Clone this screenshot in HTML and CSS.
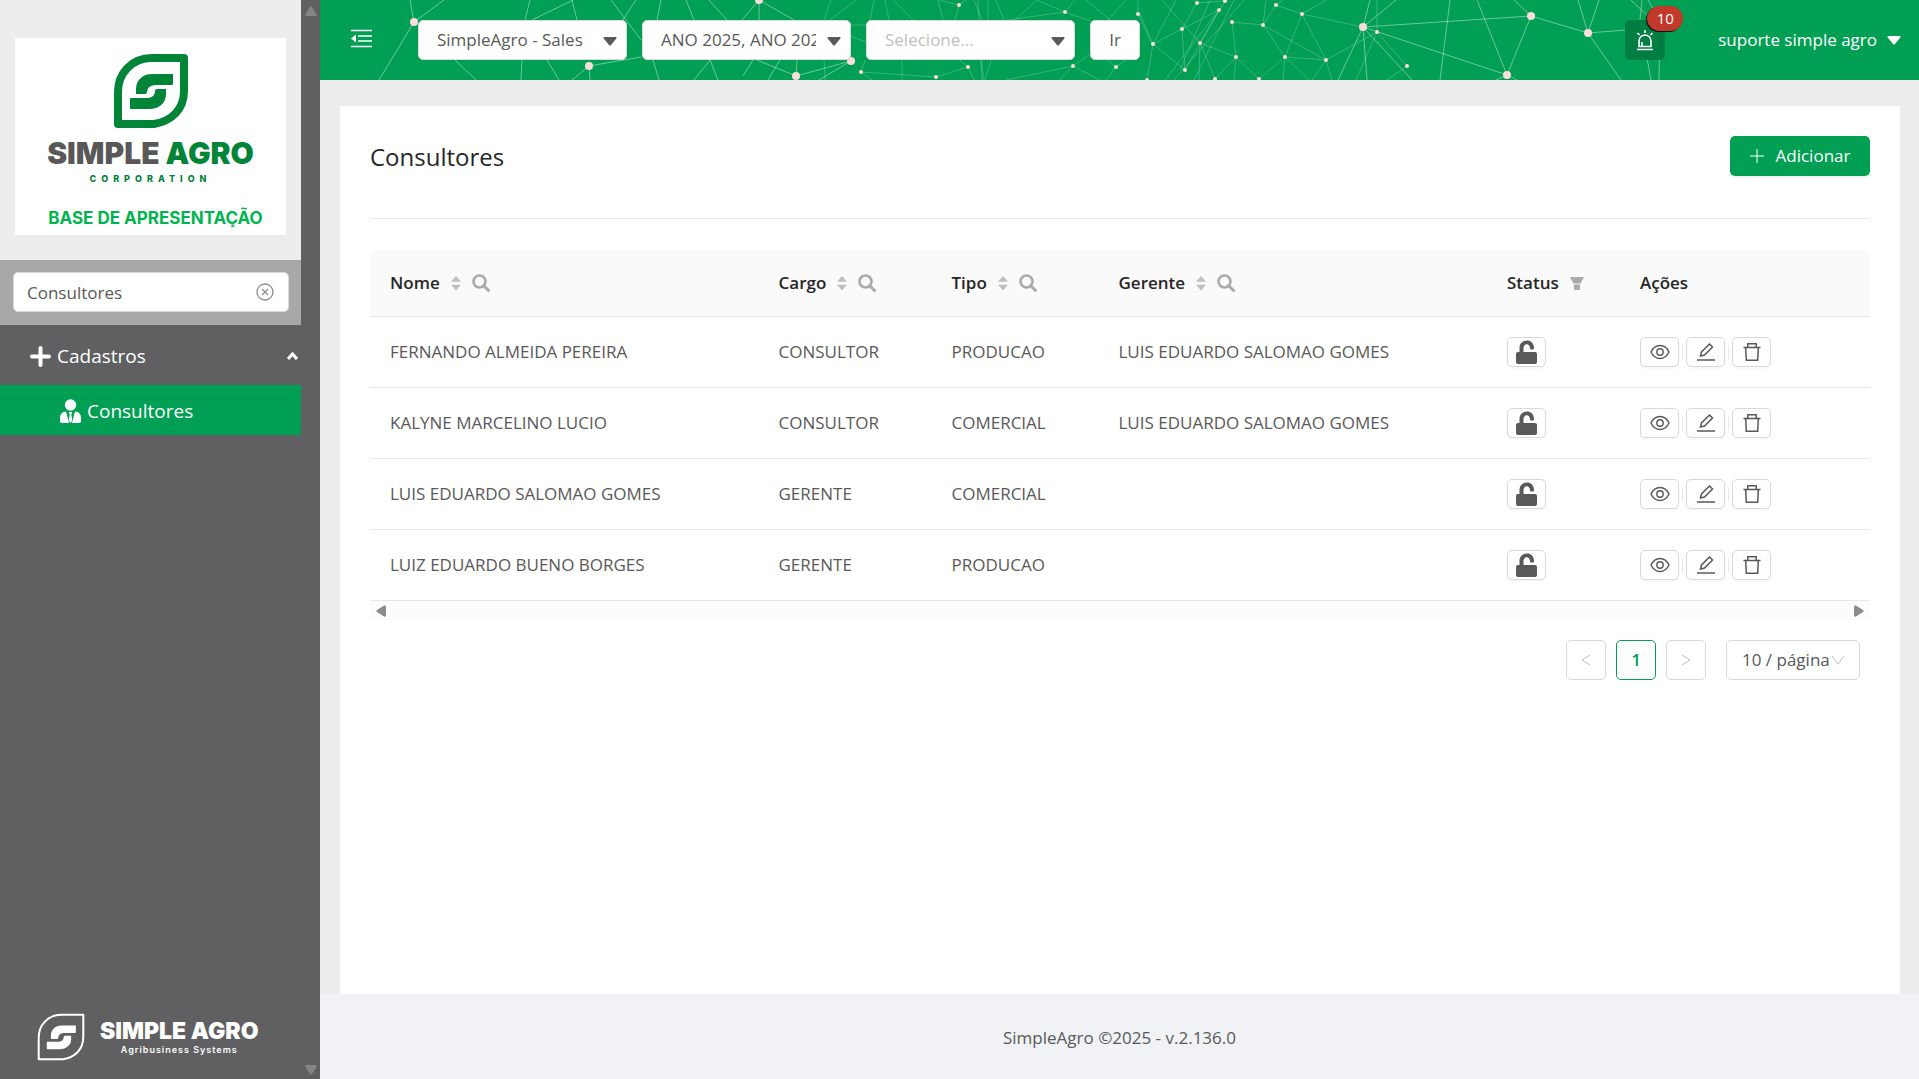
FILE: index.html
```html
<!DOCTYPE html>
<html lang="pt-BR">
<head>
<meta charset="utf-8">
<meta name="viewport" content="width=device-width, initial-scale=1">
<title>SimpleAgro - Consultores</title>
<link rel="stylesheet" href="styles.css">
</head>
<body>
<svg class="sprite" aria-hidden="true">
  <symbol id="i-caret" viewBox="0 0 14 9"><path d="M1 0h12q1 .5.3 1.400L8 8q-1 1-2 0L.7 1.400Q0 .5 1 0z"/></symbol>
  <symbol id="i-sort" viewBox="0 0 10 16"><path d="M5 1l5 5.800H0zM5 15.500l5-5.800H0z"/></symbol>
  <symbol id="i-search" viewBox="0 0 18 18"><circle cx="7.500" cy="7.500" r="6" fill="none" stroke="currentColor" stroke-width="2.600"/><path d="M11.500 11.500l5 5" stroke="currentColor" stroke-width="3" stroke-linecap="round"/></symbol>
  <symbol id="i-eye" viewBox="0 0 20 16"><path d="M1 8C5-.7 15-.7 19 8 15 16.700 5 16.700 1 8z" fill="none" stroke="currentColor" stroke-width="1.400"/><circle cx="10" cy="8" r="3.200" fill="none" stroke="currentColor" stroke-width="1.400"/></symbol>
  <symbol id="i-edit" viewBox="0 0 18 18"><path d="M3.500 13l1-4L12.500 1l3 3-8 8zM0 17h18" fill="none" stroke="currentColor" stroke-width="1.500"/></symbol>
  <symbol id="i-trash" viewBox="0 0 18 18"><path d="M.5 4.500h17M2.700 4.500l.6 12.700h11.400l.6-12.700M4.800 4V.8h8.400V4" fill="none" stroke="currentColor" stroke-width="1.500"/></symbol>
  <symbol id="i-unlock" viewBox="0 0 22 24"><path d="M3.500 12V8C3.500-1.500 18-2.500 18 8v.5q0 1-1 1h-2q-1 0-1-1C14 3 7.500 3 7.500 8v4H19q2 0 2 2v8q0 2-2 2H2q-2 0-2-2v-8q0-2 2-2z"/></symbol>
  <symbol id="i-leaf" viewBox="0 0 74 74"><path d="M38 4h32v33c0 18-12 30-30 33H4V38C4 20 17 4 38 4z" fill="none" stroke="currentColor" stroke-width="var(--leaf-line)" stroke-linejoin="round"/><path d="M59 20v10q0 1-1 1H41q-8 1-8 7 0 2-2 2H22V35c0-9 7-15 16-15zM16 54V45q0-1 1-1h17q7-1 7-7 0-2 2-2h9v5c0 9-7 15-17 15H17q-1 0-1-1z" fill="currentColor"/></symbol>
</svg>

<aside class="sidebar">
  <div class="side-main">
    <div class="brand">
      <div class="brand-card">
        <svg class="brand-leaf" aria-hidden="true"><use href="#i-leaf"/></svg>
        <p class="brand-name">SIMPLE <span>AGRO</span></p>
        <p class="brand-sub">CORPORATION</p>
        <p class="brand-base">BASE DE APRESENTAÇÃO</p>
      </div>
    </div>
    <div class="side-search">
      <div class="search-box">
        <input type="text" value="Consultores" aria-label="Pesquisar no menu">
        <button type="button" class="clear" aria-label="Limpar"><svg viewBox="0 0 18 18" aria-hidden="true"><circle cx="9" cy="9" r="8"/><path d="M6 6l6 6M12 6l-6 6"/></svg></button>
      </div>
    </div>
    <nav>
      <button type="button" class="menu-group">
        <svg class="plus" viewBox="0 0 21 21" aria-hidden="true"><path d="M10.500 2v17M2 10.500h17"/></svg>
        <span>Cadastros</span>
        <svg class="chev" viewBox="0 0 11 8" aria-hidden="true"><path d="M1 7l4.500-5L10 7"/></svg>
      </button>
      <a class="menu-item" href="#consultores">
        <svg viewBox="0 0 21 24" aria-hidden="true"><circle cx="10.500" cy="6" r="5.700"/><path d="M6 12.500l3 11.500H2q-2 0-2-2v-3q0-6 6-6.500zM15 12.500q6 .5 6 6.500v3q0 2-2 2h-7zM8.700 13h3.600l-1 2.500 1 6-1.800 2.500-1.800-2.500 1-6z"/></svg>
        <span>Consultores</span>
      </a>
    </nav>
    <div class="side-foot">
      <svg class="foot-leaf" aria-hidden="true"><use href="#i-leaf"/></svg>
      <div>
        <p class="foot-name">SIMPLE AGRO</p>
        <p class="foot-sub">Agribusiness Systems</p>
      </div>
    </div>
  </div>
  <div class="side-scroll" aria-hidden="true">
    <svg viewBox="0 0 12 10"><path d="M5 1q1-1.500 2 0l4.500 7q.5 2-1 2h-9q-1.500 0-1-2z"/></svg>
    <svg viewBox="0 0 12 10"><path d="M5 9q1 1.500 2 0l4.500-7q.5-2-1-2h-9q-1.500 0-1 2z"/></svg>
  </div>
</aside>

<div class="page">
  <header class="topbar">
    <svg class="net" viewBox="320 0 1599 80" preserveAspectRatio="xMinYMin slice" aria-hidden="true">
      <path class="far" d="M856 0L830 20M831 0L824 20M874 0L870 20M885 0l4 20M893 0l20 20M850 25h16M850 36l16 6M824 60l1 20M861 72l4-12M861 72l75 5 32-10M861 72l11 8M902 60v20M968 67l-8-7M968 67l6 13M981 60l3 20M991 60l-6 20M939 0l20 5 7-5M959 5l-4 15M938 0l5 20M974 0l8 20M978 0l4 80M988 0v20M996 0l8 20M1065 12l-58 8M1065 12l-28-12M1037 0l-22 20M1065 12l28 10M1065 12l10-12M1086 0l24 20M1126 0l-18 20M1138 14V0M1138 14l14 30M1073 66L1006 80M1073 66l16-11M1073 66l-13 14M1073 66l27 14M1116 67l-8-7M1116 67l-10 13M1116 67l10-7M1140 14l13 30M1153 44l-6 36M1153 44l29-15 37-19M1153 44l32 26M1153 44l23-44M1162 0l38 43M1182 29l15-26M1182 29l3 41M1185 70l34-60M1219 10l-54 70M1197 3l28-2M1225 1l-25 42-1 37M1200 43l36 14M1200 43l15 36M1244 0l-70 80M1234 0l-40 80M1210 0l-30 70M1232 22l31 3M1232 22l4 35-2 23M1236 57l-21 22M1236 57l23 22M1263 25l3-25M1263 25l13-20 26 9M1276 5l7-5M1302 14l24-14M1302 14l61 13M1302 14l24 46M1302 14l-17 43M1263 25l22 32M1263 25l63 35M1285 57l41 3 51-28M1285 57l-26 22M1285 57l-2 23M1285 57l24 23M1326 60l-14 20M1326 60l6 20M1377 32l30 34-20 14M1377 32l-21 48M1377 0v32"/>
      <path class="near" d="M414 22L410 0M414 22L444 0M414 22L379 80M455 60l21 20M525 20l5-20M532 20l41-20M572 0l5 20M522 60l-1 20M547 60l12 20M589 66l-17 14M589 66l1 14M589 66l52-9M611 0l30 40M636 0l-40 60M661 0l-4 20M686 0l8 20M709 0l18 20M653 60l6 20M694 80l16-20 8 20M759 0l-17 20M759 0v20M759 0l35 20M851 61l-55 15M851 61l-32 19M796 76l-39-16M796 76l1-16M780 60l-12 20M743 76l10-16M1370 0l-7 27M1396 0l-33 27-25 53M1363 27l4 53M1363 27l49 53M1363 27l168-11M1363 27l144 48 24-59M1450 0l-10 80M1477 0l30 75M1514 0l17 16 57 17M1507 75l-11 5M1507 75l10 5M1578 0l10 33 11-33M1588 33l38-3M1588 33l33 47M1631 0l25 24M1642 0l-2 20 11 60M1648 0l12 20-1 60"/>
      <g class="dots">
        <circle cx="414" cy="22" r="4"/><circle cx="589" cy="66" r="4"/><circle cx="759" cy="0" r="4"/><circle cx="796" cy="76" r="4"/><circle cx="851" cy="61" r="4"/><circle cx="1363" cy="27" r="4"/><circle cx="1531" cy="16" r="4"/><circle cx="1507" cy="75" r="4"/><circle cx="1588" cy="33" r="4"/>
        <circle cx="861" cy="72" r="2"/><circle cx="959" cy="5" r="2"/><circle cx="1065" cy="12" r="2"/><circle cx="936" cy="77" r="2"/><circle cx="968" cy="67" r="2"/><circle cx="1073" cy="66" r="2"/><circle cx="1116" cy="67" r="2"/><circle cx="1138" cy="14" r="2"/><circle cx="1197" cy="3" r="2"/><circle cx="1225" cy="1" r="2"/><circle cx="1219" cy="10" r="2"/><circle cx="1182" cy="29" r="2"/><circle cx="1153" cy="44" r="2"/><circle cx="1200" cy="43" r="2"/><circle cx="1232" cy="22" r="2"/><circle cx="1263" cy="25" r="2"/><circle cx="1276" cy="5" r="2"/><circle cx="1302" cy="14" r="2"/><circle cx="1236" cy="57" r="2"/><circle cx="1185" cy="70" r="2"/><circle cx="1285" cy="57" r="2"/><circle cx="1326" cy="60" r="2"/><circle cx="1377" cy="32" r="2"/><circle cx="1407" cy="66" r="2"/><circle cx="1215" cy="79" r="2"/><circle cx="1259" cy="79" r="2"/><circle cx="1147" cy="80" r="2"/>
      </g>
    </svg>
    <button type="button" class="fold" aria-label="Recolher menu"><svg viewBox="0 0 21 19" aria-hidden="true"><path d="M0 1.500h21M7 7h14M7 12h14M0 17.500h21" stroke="currentColor" stroke-width="1.600"/><path d="M5 5.500v8L0 9.500z" fill="currentColor"/></svg></button>
    <form class="filters">
      <div class="pick"><select aria-label="Sistema"><option>SimpleAgro - Sales</option></select><svg aria-hidden="true"><use href="#i-caret"/></svg></div>
      <div class="pick"><select aria-label="Safra"><option>ANO 2025, ANO 2024</option></select><svg aria-hidden="true"><use href="#i-caret"/></svg></div>
      <div class="pick empty"><select aria-label="Filtro"><option>Selecione...</option></select><svg aria-hidden="true"><use href="#i-caret"/></svg></div>
      <button type="button" class="go">Ir</button>
    </form>
    <button type="button" class="bell" aria-label="Notificações">
      <svg viewBox="0 0 18 21" aria-hidden="true"><path d="M1 19.500h16M3 16.500V11a6 6 0 0 1 12 0v5.500zM6 16v-4M9 0v3M1.500 3l2 2M16.500 3l-2 2"/></svg>
      <span class="badge">10</span>
    </button>
    <button type="button" class="user">suporte simple agro <svg aria-hidden="true"><use href="#i-caret"/></svg></button>
  </header>

  <main class="card">
    <div class="card-head">
      <h1>Consultores</h1>
      <button type="button" class="add"><svg viewBox="0 0 14 14" aria-hidden="true"><path d="M7 0v14M0 7h14"/></svg>Adicionar</button>
    </div>
    <div class="table-wrap">
      <table>
        <colgroup><col><col class="c-cargo"><col class="c-tipo"><col><col class="c-status"><col class="c-acoes"></colgroup>
        <thead>
          <tr>
            <th scope="col"><span class="th">Nome <svg class="sort"><use href="#i-sort"/></svg><svg class="lens"><use href="#i-search"/></svg></span></th>
            <th scope="col"><span class="th">Cargo <svg class="sort"><use href="#i-sort"/></svg><svg class="lens"><use href="#i-search"/></svg></span></th>
            <th scope="col"><span class="th">Tipo <svg class="sort"><use href="#i-sort"/></svg><svg class="lens"><use href="#i-search"/></svg></span></th>
            <th scope="col"><span class="th">Gerente <svg class="sort"><use href="#i-sort"/></svg><svg class="lens"><use href="#i-search"/></svg></span></th>
            <th scope="col"><span class="th">Status <svg class="funnel" viewBox="0 0 14 13"><path d="M0 0h14l-3.500 6.500h-7zM4 7.500h6V13H4z"/></svg></span></th>
            <th scope="col">Ações</th>
          </tr>
        </thead>
        <tbody>
          <tr><td>FERNANDO ALMEIDA PEREIRA</td><td>CONSULTOR</td><td>PRODUCAO</td><td>LUIS EDUARDO SALOMAO GOMES</td>
            <td><button type="button" class="act" aria-label="Desbloqueado"><svg class="lock"><use href="#i-unlock"/></svg></button></td>
            <td><div class="acts"><button type="button" class="act" aria-label="Ver"><svg class="eye"><use href="#i-eye"/></svg></button><i></i><button type="button" class="act" aria-label="Editar"><svg><use href="#i-edit"/></svg></button><i></i><button type="button" class="act" aria-label="Excluir"><svg><use href="#i-trash"/></svg></button></div></td></tr>
          <tr><td>KALYNE MARCELINO LUCIO</td><td>CONSULTOR</td><td>COMERCIAL</td><td>LUIS EDUARDO SALOMAO GOMES</td>
            <td><button type="button" class="act" aria-label="Desbloqueado"><svg class="lock"><use href="#i-unlock"/></svg></button></td>
            <td><div class="acts"><button type="button" class="act" aria-label="Ver"><svg class="eye"><use href="#i-eye"/></svg></button><i></i><button type="button" class="act" aria-label="Editar"><svg><use href="#i-edit"/></svg></button><i></i><button type="button" class="act" aria-label="Excluir"><svg><use href="#i-trash"/></svg></button></div></td></tr>
          <tr><td>LUIS EDUARDO SALOMAO GOMES</td><td>GERENTE</td><td>COMERCIAL</td><td></td>
            <td><button type="button" class="act" aria-label="Desbloqueado"><svg class="lock"><use href="#i-unlock"/></svg></button></td>
            <td><div class="acts"><button type="button" class="act" aria-label="Ver"><svg class="eye"><use href="#i-eye"/></svg></button><i></i><button type="button" class="act" aria-label="Editar"><svg><use href="#i-edit"/></svg></button><i></i><button type="button" class="act" aria-label="Excluir"><svg><use href="#i-trash"/></svg></button></div></td></tr>
          <tr><td>LUIZ EDUARDO BUENO BORGES</td><td>GERENTE</td><td>PRODUCAO</td><td></td>
            <td><button type="button" class="act" aria-label="Desbloqueado"><svg class="lock"><use href="#i-unlock"/></svg></button></td>
            <td><div class="acts"><button type="button" class="act" aria-label="Ver"><svg class="eye"><use href="#i-eye"/></svg></button><i></i><button type="button" class="act" aria-label="Editar"><svg><use href="#i-edit"/></svg></button><i></i><button type="button" class="act" aria-label="Excluir"><svg><use href="#i-trash"/></svg></button></div></td></tr>
        </tbody>
      </table>
      <div class="hscroll" aria-hidden="true">
        <svg viewBox="0 0 10 12"><path d="M1 5q-1.500 1 0 2l7 4.500q2 .5 2-1v-9q0-1.500-2-1z"/></svg>
        <svg viewBox="0 0 10 12"><path d="M9 5q1.500 1 0 2l-7 4.500q-2 .5-2-1v-9q0-1.500 2-1z"/></svg>
      </div>
    </div>
    <div class="pager">
      <button type="button" class="pg" aria-label="Anterior"><svg viewBox="0 0 10 12"><path d="M9 1L1 6l8 5"/></svg></button>
      <button type="button" class="pg on">1</button>
      <button type="button" class="pg" aria-label="Próxima"><svg viewBox="0 0 10 12"><path d="M1 1l8 5-8 5"/></svg></button>
      <div class="size"><select aria-label="Itens por página"><option>10 / página</option></select><svg viewBox="0 0 12 10" aria-hidden="true"><path d="M0 1l6 8 6-8"/></svg></div>
    </div>
  </main>
  <footer>SimpleAgro ©2025 - v.2.136.0</footer>
</div>
</body>
</html>
```
FILE: styles.css
```css
:root {
  --green: #009f54;
  --gray: #606062;
  --text: #595959;
  --line: #e8e8e8;
  --border: #d9d9d9;
}
* { box-sizing: border-box; }
body {
  margin: 0;
  min-height: 100vh;
  display: flex;
  background: #ededed;
  color: var(--text);
  font: 17px/26px "Open Sans", "Noto Sans", sans-serif;
}
p, h1 { margin: 0; }
button, input, select { font: inherit; color: inherit; margin: 0; }
button { background: none; border: 0; padding: 0; cursor: pointer; }
svg { display: block; flex: none; fill: currentColor; }
.sprite { position: absolute; width: 0; height: 0; }

/* Sidebar */
.sidebar { flex: none; width: 320px; display: flex; background: var(--gray); color: #fff; }
.side-main { flex: 1; display: flex; flex-direction: column; }
.side-scroll {
  width: 19px;
  display: flex;
  flex-direction: column;
  justify-content: space-between;
  align-items: center;
  padding: 6px 0 4px;
  color: #858587;
}
.side-scroll svg { width: 12px; height: 10px; }
.brand { background: #ededed; padding: 38px 15px 25px; }
.brand-card {
  background: #fff;
  height: 197px;
  padding-top: 16px;
  display: flex;
  flex-direction: column;
  align-items: center;
  color: #008438;
  white-space: nowrap;
}
.brand-leaf { width: 74px; height: 74px; --leaf-line: 8px; }
.brand-name { margin-top: 9px; font: 900 30px/32px Inter, sans-serif; color: #595858; }
.brand-name span { color: #008438; }
.brand-sub { margin-top: 3px; font: 800 9px/14px Inter, sans-serif; letter-spacing: 5px; }
.brand-base { margin: 17px 0 0 10px; font: 700 17px/30px Inter, sans-serif; color: #00b450; }
.side-search { background: #a8a8a8; padding: 12px 12px 13px 13px; }
.search-box {
  display: flex;
  align-items: center;
  height: 40px;
  padding: 0 14px 0 13px;
  background: #fff;
  border: 1px solid var(--border);
  border-radius: 5px;
  color: var(--text);
}
.search-box input { flex: 1; min-width: 0; border: 0; padding: 2px 0 0; outline: 0; background: none; }
.clear svg { width: 18px; height: 18px; fill: none; stroke: #8c8c8c; stroke-width: 1.300; }
.menu-group {
  width: 100%;
  height: 60px;
  display: flex;
  align-items: center;
  gap: 6px;
  padding: 2px 3px 0 30px;
  font-size: 19px;
}
.menu-group .plus { width: 21px; height: 21px; fill: none; stroke: #fff; stroke-width: 4; stroke-linecap: round; }
.menu-group .chev { width: 11px; height: 8px; margin-left: auto; fill: none; stroke: #fff; stroke-width: 3; }
.menu-item {
  display: flex;
  align-items: center;
  gap: 6px;
  height: 50px;
  padding: 2px 0 0 60px;
  background: var(--green);
  color: #fff;
  font-size: 19px;
  text-decoration: none;
}
.menu-item svg { width: 21px; height: 24px; }
.side-foot { margin-top: auto; display: flex; gap: 14px; padding: 0 0 17px 36px; white-space: nowrap; }
.foot-leaf { width: 50px; height: 50px; --leaf-line: 3px; }
.foot-name { margin-top: 7px; font: 900 23px/24px Inter, sans-serif; }
.foot-sub { font: 600 9px/14px Inter, sans-serif; letter-spacing: 1px; text-align: center; }

/* Top bar */
.page { flex: 1; min-width: 0; display: flex; flex-direction: column; }
.topbar {
  position: relative;
  display: flex;
  align-items: center;
  height: 80px;
  padding: 0 18px 0 31px;
  background: var(--green);
  color: #fff;
}
.topbar > * { position: relative; }
.topbar > .net { position: absolute; inset: 0; width: 100%; height: 100%; fill: none; stroke: #fff; }
.net .far { stroke-opacity: .22; }
.net .near { stroke-opacity: .42; }
.net .dots { fill: #fcdcdc; stroke: none; }
.fold { padding-bottom: 4px; }
.fold svg { width: 21px; height: 19px; }
.filters { display: flex; gap: 15px; margin-left: 46px; color: var(--text); }
.pick { position: relative; width: 209px; }
.pick select {
  appearance: none;
  display: block;
  width: 100%;
  height: 40px;
  padding: 0 34px 0 18px;
  background: #fff;
  border: 1px solid var(--border);
  border-radius: 5px;
}
.pick svg { position: absolute; right: 10px; top: 17px; width: 14px; height: 9px; pointer-events: none; }
.pick.empty select { color: #bfbfbf; }
.go { width: 50px; height: 40px; background: #fff; border: 1px solid var(--border); border-radius: 5px; }
.bell {
  margin-left: auto;
  width: 40px;
  height: 40px;
  display: flex;
  align-items: center;
  justify-content: center;
  border-radius: 5px;
  background: #007d43;
}
.bell svg { width: 18px; height: 21px; fill: none; stroke: #fff; stroke-width: 1.600; }
.badge {
  position: absolute;
  right: -18px;
  top: -14px;
  width: 36px;
  height: 25px;
  border-radius: 13px;
  background: #c0392b;
  box-shadow: -1px 1px 0 #111;
  font-size: 15px;
  line-height: 25px;
}
.user { display: flex; align-items: center; gap: 10px; margin-left: 53px; }
.user svg { width: 14px; height: 9px; }

/* Content */
.card { flex: 1; margin: 26px 19px 0 20px; padding: 30px; background: #fff; }
.card-head {
  display: flex;
  justify-content: space-between;
  align-items: flex-start;
  height: 83px;
  border-bottom: 1px solid var(--line);
}
h1 { font-size: 24px; line-height: 42px; font-weight: 400; color: #262626; }
.add {
  display: flex;
  align-items: center;
  justify-content: center;
  gap: 12px;
  width: 140px;
  height: 40px;
  border-radius: 5px;
  background: var(--green);
  color: #fff;
  box-shadow: 0 2px 2px rgba(0, 0, 0, .06);
}
.add svg { width: 14px; height: 14px; stroke: #fff; }
.table-wrap { margin-top: 31px; }
table { width: 100%; table-layout: fixed; border-collapse: separate; border-spacing: 0; }
.c-cargo { width: 173px; }
.c-tipo { width: 167px; }
.c-status { width: 133px; }
.c-acoes { width: 250px; }
th, td { padding: 0 20px; text-align: left; border-bottom: 1px solid var(--line); white-space: nowrap; }
th { height: 67px; background: #fafafa; color: #262626; font-weight: 600; }
th:first-child { border-top-left-radius: 5px; }
th:last-child { border-top-right-radius: 5px; }
td { height: 71px; }
.th { display: flex; align-items: center; gap: 11px; color: #262626; }
.th svg { color: #bfbfbf; }
.sort { width: 10px; height: 16px; }
.th .lens { width: 18px; height: 18px; color: #ababab; }
.th .funnel { width: 14px; height: 13px; color: #ababab; }
.act {
  width: 39px;
  height: 30px;
  display: flex;
  align-items: center;
  justify-content: center;
  background: #fff;
  border: 1px solid var(--border);
  border-radius: 5px;
  box-shadow: 0 2px 2px rgba(0, 0, 0, .03);
}
.act svg { width: 18px; height: 18px; }
.act .eye { width: 20px; height: 16px; }
.act .lock { width: 22px; height: 24px; }
.acts { display: flex; align-items: center; gap: 3px; }
.acts i { width: 1px; height: 13px; background: var(--line); }
.hscroll {
  height: 19px;
  display: flex;
  align-items: center;
  justify-content: space-between;
  padding: 0 6px;
  background: #fcfcfc;
  color: #8b8b8b;
}
.hscroll svg { width: 10px; height: 12px; }
.pager { display: flex; justify-content: flex-end; gap: 10px; padding: 20px 10px 0 0; }
.pg {
  width: 40px;
  height: 40px;
  display: flex;
  align-items: center;
  justify-content: center;
  border: 1px solid var(--border);
  border-radius: 5px;
}
.pg svg { width: 10px; height: 12px; fill: none; stroke: #bfbfbf; }
.pg.on { border-color: var(--green); color: var(--green); font-weight: 600; }
.size { position: relative; width: 134px; margin-left: 10px; }
.size select {
  appearance: none;
  display: block;
  width: 100%;
  height: 40px;
  padding: 0 15px;
  background: #fff;
  border: 1px solid var(--border);
  border-radius: 5px;
}
.size svg { position: absolute; right: 16px; top: 15px; width: 12px; height: 10px; fill: none; stroke: #bfbfbf; pointer-events: none; }
footer { height: 85px; line-height: 88px; text-align: center; background: #f0f2f5; }
```
